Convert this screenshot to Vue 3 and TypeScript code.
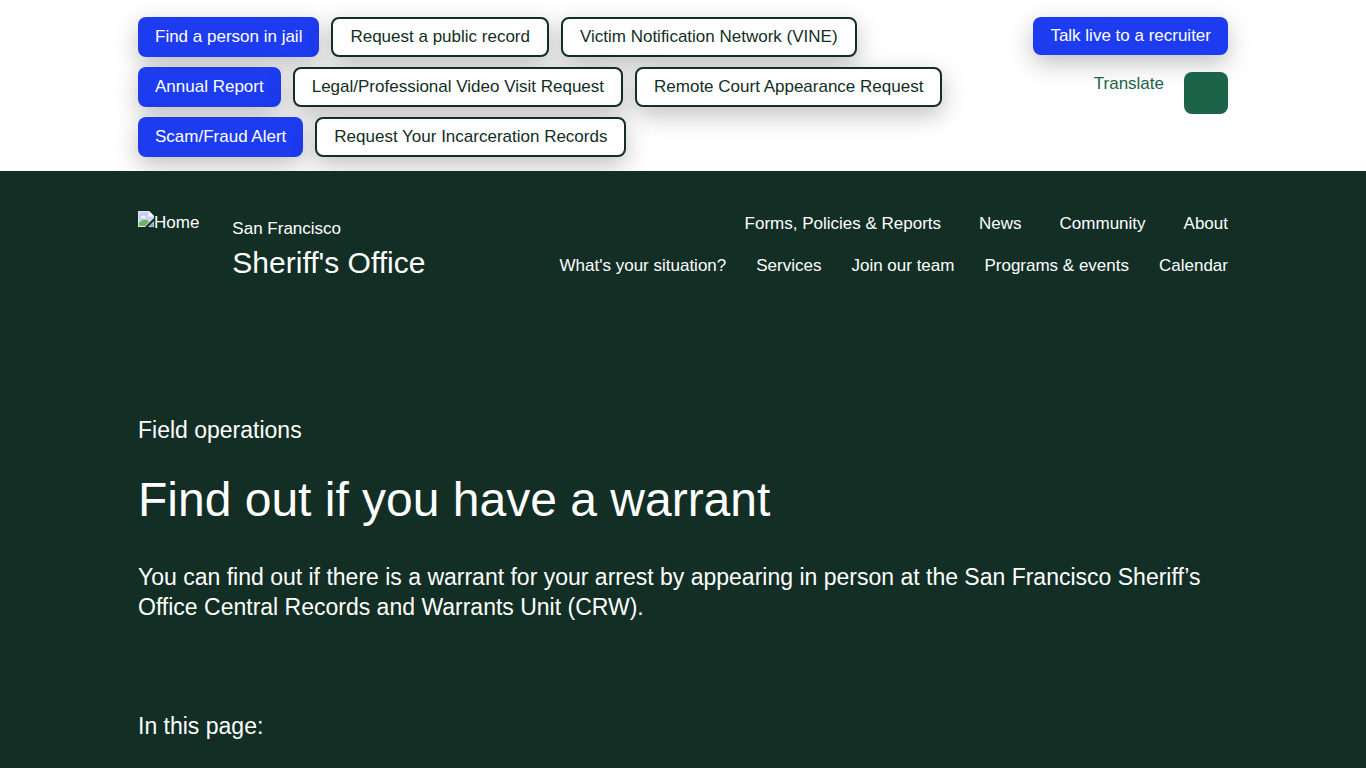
<script setup lang="ts">
interface QuickLink {
  label: string
  primary?: boolean
}

const quickLinks: QuickLink[] = [
  { label: 'Find a person in jail', primary: true },
  { label: 'Request a public record' },
  { label: 'Victim Notification Network (VINE)' },
  { label: 'Annual Report', primary: true },
  { label: 'Legal/Professional Video Visit Request' },
  { label: 'Remote Court Appearance Request' },
  { label: 'Scam/Fraud Alert', primary: true },
  { label: 'Request Your Incarceration Records' },
]

const secondaryNav: string[] = ['Forms, Policies & Reports', 'News', 'Community', 'About']
const mainNav: string[] = [
  "What's your situation?",
  'Services',
  'Join our team',
  'Programs & events',
  'Calendar',
]
</script>

<template>
  <div class="page">
    <div class="topbar">
      <div class="container topbar-inner">
        <nav class="quick" aria-label="Quick links">
          <a
            v-for="link in quickLinks"
            :key="link.label"
            href="#"
            class="btn"
            :class="link.primary ? 'btn-primary' : 'btn-outline'"
          >{{ link.label }}</a>
        </nav>
        <div class="tools">
          <a href="#" class="btn btn-primary btn-live">Talk live to a recruiter</a>
          <div class="tool-row">
            <a href="#" class="translate">Translate</a>
            <button type="button" class="search" aria-label="Search"></button>
          </div>
        </div>
      </div>
    </div>

    <header class="container header">
      <div class="brand">
        <a href="#" class="home">
          <svg width="16" height="16" viewBox="0 0 16 16" aria-hidden="true">
            <path d="M0 0H11L16 5V7L7 16H0Z" fill="#dfe6f2" />
            <path d="M1 1H10V6H15V7L11 11L1 11Z" fill="#c3d3f1" />
            <path d="M11 0V5H16Z" fill="#f5f7fb" />
            <path d="M3 6.500C3 5 5 4.500 5.500 5.500C7 5 8 6 7.500 7H3Z" fill="#fff" />
            <path d="M1 15V12C3 9 6 8 9 9L11 11L7 15Z" fill="#6fb45c" />
            <path d="M16 10V16H10Z" fill="#b9c8dd" />
            <path d="M15 12V15H12Z" fill="#6fb45c" />
          </svg><span>Home</span>
        </a>
        <a href="#" class="name">
          <span class="city">San Francisco</span>
          <span class="office">Sheriff's Office</span>
        </a>
      </div>
      <div class="menus">
        <nav class="menu menu-secondary" aria-label="Secondary">
          <a v-for="item in secondaryNav" :key="item" href="#">{{ item }}</a>
        </nav>
        <nav class="menu" aria-label="Main">
          <a v-for="item in mainNav" :key="item" href="#">{{ item }}</a>
        </nav>
      </div>
    </header>

    <main class="container content">
      <p class="lead">Field operations</p>
      <h1>Find out if you have a warrant</h1>
      <p class="lead">
        You can find out if there is a warrant for your arrest by appearing in person at the San
        Francisco Sheriff’s Office Central Records and Warrants Unit (CRW).
      </p>
      <h2 class="lead toc">In this page:</h2>
    </main>
  </div>
</template>

<style>
body {
  margin: 0;
  background: #122e25;
}
</style>

<style scoped>
.page {
  min-height: 100vh;
  overflow: hidden;
  box-sizing: border-box;
  font-family: "Liberation Sans", Arial, sans-serif;
  font-size: 17px;
  line-height: 24px;
  color: #fff;
  background: #122e25;
}

a {
  color: inherit;
  text-decoration: none;
}

.container {
  box-sizing: border-box;
  max-width: 1122px;
  margin: 0 auto;
  padding-left: 16px;
  padding-right: 16px;
}

.topbar {
  overflow: hidden;
  background: #fff;
}

.topbar-inner {
  display: grid;
  grid-template-columns: 3fr 1fr;
  padding-top: 17px;
  padding-bottom: 14px;
}

.quick {
  display: flex;
  flex-wrap: wrap;
  align-content: flex-start;
  gap: 10px 12px;
}

.btn {
  box-sizing: border-box;
  padding: 8px 17px;
  border-radius: 8px;
  box-shadow: 0 8px 24px rgba(0, 0, 0, 0.25);
  white-space: nowrap;
}

.btn-primary {
  color: #fff;
  background: #1d3bef;
}

.quick .btn-outline {
  padding-top: 6px;
  padding-bottom: 6px;
  border: 2px solid #132e26;
  color: #132e26;
  background: #fff;
}

.tools {
  display: flex;
  flex-direction: column;
  align-items: flex-end;
  gap: 17px;
}

.tools .btn-live {
  padding-top: 7px;
  padding-bottom: 7px;
}

.tool-row {
  display: flex;
  gap: 20px;
}

.translate {
  color: #1b6349;
}

.search {
  width: 44px;
  height: 42px;
  padding: 0;
  border: 0;
  border-radius: 8px;
  background: #1b6349;
}

.header {
  display: flex;
  justify-content: space-between;
  padding-top: 40px;
}

.brand {
  display: flex;
  gap: 33px;
}

.home {
  display: flex;
  align-items: flex-start;
}

.name {
  display: flex;
  flex-direction: column;
  gap: 4px;
  padding-top: 6px;
}

.office {
  font-size: 30px;
  line-height: 36px;
}

.menus {
  display: flex;
  flex-direction: column;
  align-items: flex-end;
  gap: 18px;
  padding-top: 1px;
}

.menu {
  display: flex;
  gap: 30px;
}

.menu-secondary {
  gap: 38px;
}

.content {
  padding-top: 134px;
  padding-bottom: 24px;
}

.lead {
  margin: 0;
  font-size: 23px;
  line-height: 30px;
  font-weight: 400;
}

h1 {
  margin: 25px 0 32px;
  font-size: 48px;
  line-height: 60px;
  font-weight: 400;
}

.toc {
  margin-top: 89px;
}
</style>
